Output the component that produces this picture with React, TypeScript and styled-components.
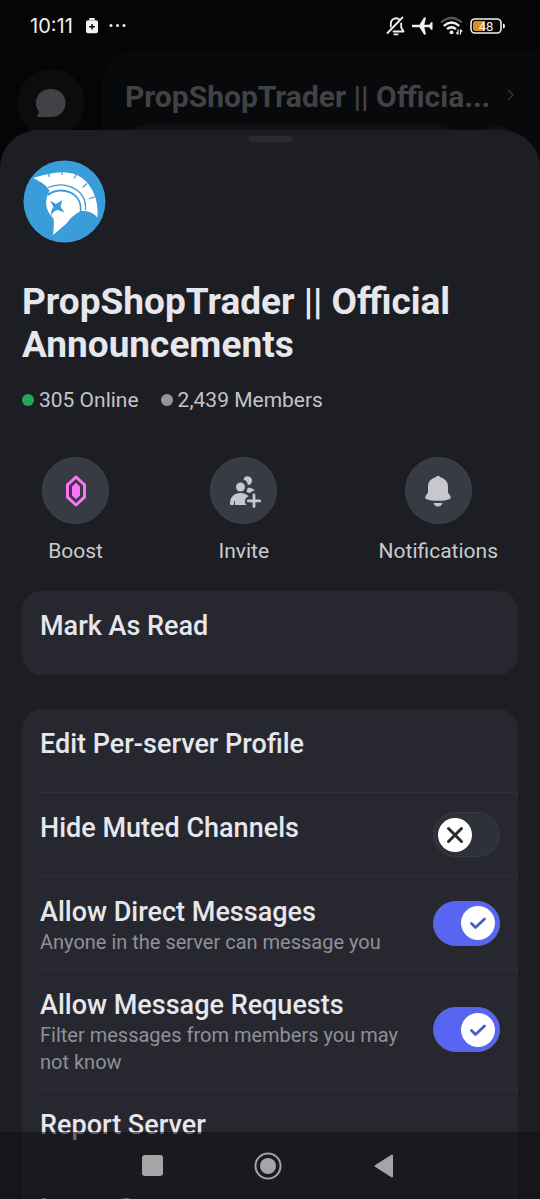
import React, { useId, useState } from "react";
import styled, { createGlobalStyle, css } from "styled-components";

const GlobalStyle = createGlobalStyle`
  *, *::before, *::after { box-sizing: border-box; }
  body {
    margin: 0;
    background: #050506;
    color: #e6e7ec;
    font-family: Roboto, "Noto Sans", sans-serif;
  }
  button {
    margin: 0;
    padding: 0;
    border: 0;
    background: none;
    color: inherit;
    font: inherit;
    cursor: pointer;
  }
`;

const Screen = styled.div`
  display: flex;
  flex-direction: column;
  height: 100vh;
  overflow: hidden;
`;

const StatusBar = styled.header`
  display: flex;
  flex: none;
  align-items: center;
  height: 52px;
  padding: 0 34px 0 30px;
  color: #f1f1f1;
`;

const Clock = styled.time`
  font: 400 20px/24px Inter, sans-serif;
  margin-right: 12px;
`;

const StatusIcons = styled.div`
  display: flex;
  align-items: center;
  gap: 6px;
  margin-left: auto;
`;

const Backdrop = styled.div`
  display: flex;
  flex: none;
  height: 118px;
  margin-bottom: -40px;
`;

const Rail = styled.div`
  display: flex;
  flex: none;
  justify-content: center;
  width: 102px;
  padding-top: 17px;
`;

const ChatBubble = styled.div`
  display: grid;
  place-items: center;
  width: 68px;
  height: 68px;
  border-radius: 50%;
  background: #0b0c0e;
  color: #414245;
`;

const ServerPanel = styled.div`
  flex: 1;
  min-width: 0;
  border-radius: 30px 0 0 0;
  background: #08090b;
`;

const ServerHeading = styled.div`
  display: flex;
  align-items: center;
  justify-content: space-between;
  padding: 23px 24px 6px 23px;
  color: #414245;
`;

const DimTitle = styled.span`
  overflow: hidden;
  font-size: 30px;
  font-weight: 700;
  line-height: 43px;
  text-overflow: ellipsis;
  white-space: nowrap;
`;

const SearchRow = styled.div`
  display: flex;
  align-items: center;
  gap: 18px;
  padding: 0 22px 0 23px;
`;

const SearchPill = styled.div`
  flex: 1;
  height: 46px;
  border-radius: 23px;
  background: #0f1013;
`;

const SearchDisc = styled.div`
  width: 42px;
  height: 42px;
  border-radius: 50%;
  background: #0f1013;
`;

const Sheet = styled.main`
  position: relative;
  flex: 1;
  min-height: 0;
  overflow-y: auto;
  padding: 6px 22px 0;
  border-radius: 38px 38px 0 0;
  background: #1d1e23;
  scrollbar-width: none;
`;

const Handle = styled.div`
  width: 45px;
  height: 6px;
  margin: 0 auto 18px;
  border-radius: 3px;
  background: #2a2b31;
`;

const Avatar = styled.svg`
  display: block;
  width: 83px;
  height: 83px;
  margin-left: 1px;
`;

const Title = styled.h1`
  margin: 37px 0 0;
  font-size: 37px;
  font-weight: 700;
  line-height: 43px;
`;

const Stats = styled.div`
  display: flex;
  gap: 22px;
  margin-top: 20px;
  color: #c3c4ca;
  font-size: 21px;
  line-height: 28px;
`;

const Stat = styled.span<{ $dot: string }>`
  display: flex;
  align-items: center;
  gap: 5px;
  &::before {
    content: "";
    width: 12px;
    height: 12px;
    border-radius: 50%;
    background: ${({ $dot }) => $dot};
  }
`;

const Actions = styled.div`
  display: flex;
  justify-content: space-between;
  margin: 43px 20px 26px;
`;

const Action = styled.button`
  display: flex;
  flex-direction: column;
  align-items: center;
  gap: 13px;
  min-width: 66px;
  color: #c9cad0;
  font-size: 21px;
  line-height: 28px;
`;

const ActionDisc = styled.span`
  display: grid;
  place-items: center;
  width: 67px;
  height: 67px;
  border: 1px solid #42444d;
  border-radius: 50%;
  background: #393b44;
`;

const Card = styled.section`
  margin-bottom: 34px;
  padding-left: 18px;
  border-radius: 20px;
  background: #27272f;
`;

const rowLook = css`
  display: flex;
  align-items: center;
  gap: 24px;
  width: 100%;
  min-height: 84px;
  padding-right: 18px;
  text-align: left;
  &:not(:last-child) { border-bottom: 1px solid #2f3038; }
`;

const Row = styled.div`
  ${rowLook}
`;

const RowButton = styled.button`
  ${rowLook}
`;

const RowText = styled.span`
  display: flex;
  flex: 1;
  flex-direction: column;
  align-self: stretch;
  min-width: 0;
  padding: 18px 0 13px;
`;

const RowLabel = styled.span`
  font-size: 27px;
  font-weight: 500;
  line-height: 34px;
`;

const RowHint = styled.span`
  color: #8f9099;
  font-size: 20px;
  line-height: 27px;
`;

const SwitchBox = styled.span`
  display: grid;
  flex: none;
  align-items: center;
`;

const SwitchTrack = styled.input`
  grid-area: 1 / 1;
  appearance: none;
  width: 67px;
  height: 45px;
  margin: 0;
  border: 1px solid #393a42;
  border-radius: 23px;
  background: #2f3138;
  cursor: pointer;
  &:checked {
    border-color: #6268c8;
    background: #5865f2;
  }
`;

const SwitchThumb = styled.span<{ $on: boolean }>`
  z-index: 1;
  display: grid;
  grid-area: 1 / 1;
  justify-self: ${({ $on }) => ($on ? "end" : "start")};
  place-items: center;
  width: 34px;
  height: 34px;
  margin: 0 5px;
  border-radius: 50%;
  background: #fff;
  color: ${({ $on }) => ($on ? "#5159c4" : "#292a31")};
  pointer-events: none;
`;

const NavBar = styled.nav`
  position: fixed;
  inset: auto 0 0;
  z-index: 2;
  display: flex;
  align-items: center;
  justify-content: center;
  gap: 87px;
  height: 67px;
  padding-right: 4px;
  background: rgba(18, 17, 20, 0.6);
  color: #a5a4a6;
`;

const NavButton = styled.button`
  display: grid;
  place-items: center;
  width: 29px;
  height: 40px;
`;

function ToggleRow({ label, hint, initial }: { label: string; hint?: string; initial: boolean }) {
  const id = useId();
  const [on, setOn] = useState(initial);
  return (
    <Row>
      <RowText>
        <RowLabel as="label" htmlFor={id}>{label}</RowLabel>
        {hint && <RowHint>{hint}</RowHint>}
      </RowText>
      <SwitchBox>
        <SwitchTrack id={id} type="checkbox" checked={on} onChange={() => setOn(!on)} />
        <SwitchThumb $on={on}>
          <svg width="20" height="20" viewBox="0 0 20 20" fill="none" stroke="currentColor" strokeLinecap="round" strokeLinejoin="round">
            {on ? <path d="M3.5 10.5 7.5 14.5 16.5 6" strokeWidth="2.8" /> : <path d="M3.5 3.5 16.5 16.5M16.5 3.5 3.5 16.5" strokeWidth="3" />}
          </svg>
        </SwitchThumb>
      </SwitchBox>
    </Row>
  );
}

function ActionRow({ label }: { label: string }) {
  return (
    <RowButton type="button">
      <RowText>
        <RowLabel>{label}</RowLabel>
      </RowText>
    </RowButton>
  );
}

export default function App() {
  return (
    <Screen>
      <GlobalStyle />
      <StatusBar>
        <Clock>10:11</Clock>
        <svg width="42" height="18" viewBox="0 0 42 18" fill="currentColor">
          <rect x="4" y="1" width="6" height="2" rx="1" />
          <path fillRule="evenodd" d="M3 3.200h8a2 2 0 0 1 2 2v9a2 2 0 0 1-2 2H3a2 2 0 0 1-2-2v-9a2 2 0 0 1 2-2ZM6.300 7v2H4.200v1.500h2.100v2h1.500v-2h2.100V9H7.800V7Z" />
          <circle cx="26" cy="8.500" r="1.500" />
          <circle cx="32.500" cy="8.500" r="1.500" />
          <circle cx="39" cy="8.500" r="1.500" />
        </svg>
        <StatusIcons>
          <svg width="20" height="20" viewBox="0 0 20 20" fill="none" stroke="currentColor" strokeWidth="1.800" strokeLinecap="round" strokeLinejoin="round">
            <path d="M1.500 17 16.500 1.500M4.800 10.500V7.500a5.200 5.200 0 0 1 8-4.400M15.200 7.500V11.500l2.300 4H7.500M8.300 18.300h3.400" />
          </svg>
          <svg width="22" height="20" viewBox="0 0 22 20" fill="currentColor">
            <path d="M1 8.700h6.500L12 1.500h2L12.300 8.700h5L19 6.200h1.500v7.600H19l-1.700-2.500h-5L14 18.500h-2L7.500 11.300H1a1.300 1.300 0 0 1 0-2.600Z" />
          </svg>
          <svg width="23" height="20" viewBox="0 0 23 20" fill="none" stroke="currentColor" strokeWidth="2.300">
            <path d="M1 6.500Q11.500 -2.500 22 6.500" stroke="#555" />
            <path d="M3.800 9.800Q11.500 3.200 19.200 9.800M7 13.200Q11.500 9.200 16 13.200" />
            <circle cx="11.500" cy="16.300" r="1.900" fill="currentColor" stroke="none" />
            <path d="M18 13.500v5M16.300 16.300l1.700 2.200M20.500 18.500v-5M20.500 13.500l1.700 2.200" strokeWidth="1.200" />
          </svg>
          <svg width="37" height="18" viewBox="0 0 37 18">
            <rect x="2" y="2" width="30" height="14" rx="4" fill="none" stroke="#f1f1f1" strokeWidth="1.600" />
            <path d="M6 4h10v10H6a2 2 0 0 1-2-2V6a2 2 0 0 1 2-2Z" fill="#d98d1e" />
            <path d="M34 6.500q2 0 2 2.500t-2 2.500Z" fill="#f1f1f1" />
            <text x="17" y="13.500" textAnchor="middle" fill="#f1f1f1" fontFamily="Roboto" fontSize="13" fontWeight="400">48</text>
          </svg>
        </StatusIcons>
      </StatusBar>

      <Backdrop>
        <Rail>
          <ChatBubble>
            <svg width="30" height="30" viewBox="0 0 30 30" fill="currentColor">
              <path d="M15.500 1a14 14 0 1 1 0 28H2.500c-1.800 0-2-1.500-.9-2.600l1.900-2.100A14 14 0 0 1 15.500 1Z" />
            </svg>
          </ChatBubble>
        </Rail>
        <ServerPanel>
          <ServerHeading>
            <DimTitle>PropShopTrader || Officia...</DimTitle>
            <svg width="12" height="18" viewBox="0 0 12 18" fill="none" stroke="#303134" strokeWidth="1.500">
              <path d="M4 2l5 5-5 5" />
            </svg>
          </ServerHeading>
          <SearchRow>
            <SearchPill />
            <SearchDisc />
          </SearchRow>
        </ServerPanel>
      </Backdrop>

      <Sheet>
        <Handle />
        <Avatar viewBox="0 0 83 83" role="img" aria-label="Server icon">
          <circle cx="41.500" cy="41.500" r="41" fill="#3b9cda" />
          <path
            fill="#fff"
            d="M10 18C24 14 40 9 54 15c14 7 22 23 20.500 42.500-4-4.500-9-7-15-6.500-4 .5-9 4.500-13 8.500-2 4-9 9-16.500 15.500 .5-6 1.500-11 .5-16.500-6-5.500-9-14-6.500-21.500 1-3 1.500-4.500 2.500-6C24 25 17 21.500 10 18Z"
          />
          <g fill="none" stroke="#3b9cda">
            <path d="M25 27.500C43 20 64 30 62.500 50" strokeWidth="1.300" />
            <path d="M25 35C36 25.500 60 31 57.500 52" strokeWidth="1.800" />
            <path d="M25 12.500l1.500 4.500M39 10v5M53.500 14l-2.500 4.500M64 23.500l-4.500 4M72 37l-6 1.500" strokeWidth="1.200" />
          </g>
          <path fill="#3b9cda" d="M27 40.500l6 3.500 6.500-4-2 6.500 4 6-6.500-2.500c-3 0-5.500 2.500-7 6-.5-3.500.5-6.500 2.500-9Z" />
        </Avatar>

        <Title>PropShopTrader || Official Announcements</Title>
        <Stats>
          <Stat $dot="#23a55a">305 Online</Stat>
          <Stat $dot="#9495a1">2,439 Members</Stat>
        </Stats>

        <Actions>
          <Action type="button">
            <ActionDisc>
              <svg width="24" height="34" viewBox="0 0 24 34">
                <path d="M12 3l8.500 7.800v12.400L12 31l-8.500-7.800V10.800Z" fill="none" stroke="#ff73fa" strokeWidth="3" strokeLinejoin="round" />
                <path d="M12 8.800l4 3.700v9L12 25.200l-4-3.700v-9Z" fill="#ff73fa" />
              </svg>
            </ActionDisc>
            Boost
          </Action>
          <Action type="button">
            <ActionDisc>
              <svg width="34" height="34" viewBox="0 0 34 34" fill="#c7c8ce">
                <path d="M16.500 5.500A4.300 4.300 0 1 1 20.800 11 6.400 6.400 0 0 0 16.500 5.500Z" />
                <circle cx="13.500" cy="13" r="4.500" />
                <path d="M20.500 14c3-.5 5.500.5 7 2.500-2 .5-3.500 1.300-4.500 2.500l-2.500-.5-1-1.500c.7-1 1-2 1-3Z" />
                <path d="M13.500 19c3.700 0 6.500 1.200 8.200 3.500-4.200 1-4.700 6-2.200 8.500H8v-3.500c0-1-.8-1-.8 0L6.800 31H4.500c-1 0-1.500-.5-1.500-1.500C3 23 7.500 19 13.500 19Z" />
                <path d="M27 21v11.500M21.200 26.800h11.600" stroke="#c7c8ce" strokeWidth="2.800" strokeLinecap="round" />
              </svg>
            </ActionDisc>
            Invite
          </Action>
          <Action type="button">
            <ActionDisc>
              <svg width="34" height="34" viewBox="0 0 34 34" fill="#c7c8ce">
                <path d="M14.700 3.300a2.500 2.500 0 0 1 4.600 0c4.500 1.200 7.700 4.500 7.700 9.200v5.500c0 .8.300 1.300.9 1.900 1.700 1.700 2.500 4.100 1.100 5-5.500 2.500-18.500 2.500-24 0-1.400-.9-.6-3.300 1.100-5 .6-.6.900-1.100.9-1.900v-5.500c0-4.700 3.200-8 7.700-9.200Z" />
                <path d="M12.500 28.800c3 .4 6 .4 9 0a4.600 4.600 0 0 1-9 0Z" />
              </svg>
            </ActionDisc>
            Notifications
          </Action>
        </Actions>

        <Card>
          <ActionRow label="Mark As Read" />
        </Card>
        <Card>
          <ActionRow label="Edit Per-server Profile" />
          <ToggleRow label="Hide Muted Channels" initial={false} />
          <ToggleRow label="Allow Direct Messages" hint="Anyone in the server can message you" initial />
          <ToggleRow label="Allow Message Requests" hint="Filter messages from members you may not know" initial />
          <ActionRow label="Report Server" />
          <ActionRow label="Leave Server" />
        </Card>
      </Sheet>

      <NavBar aria-label="System navigation">
        <NavButton type="button" aria-label="Recent apps">
          <svg width="21" height="21"><rect width="21" height="21" rx="3" fill="currentColor" /></svg>
        </NavButton>
        <NavButton type="button" aria-label="Home">
          <svg width="28" height="28" viewBox="0 0 28 28">
            <circle cx="14" cy="14" r="12.500" fill="none" stroke="currentColor" strokeWidth="2" />
            <circle cx="14" cy="14" r="8" fill="currentColor" />
          </svg>
        </NavButton>
        <NavButton type="button" aria-label="Back">
          <svg width="20" height="24" viewBox="0 0 20 24"><path d="M18 1.500v21L1.500 12Z" fill="currentColor" stroke="currentColor" strokeWidth="2" strokeLinejoin="round" /></svg>
        </NavButton>
      </NavBar>
    </Screen>
  );
}
